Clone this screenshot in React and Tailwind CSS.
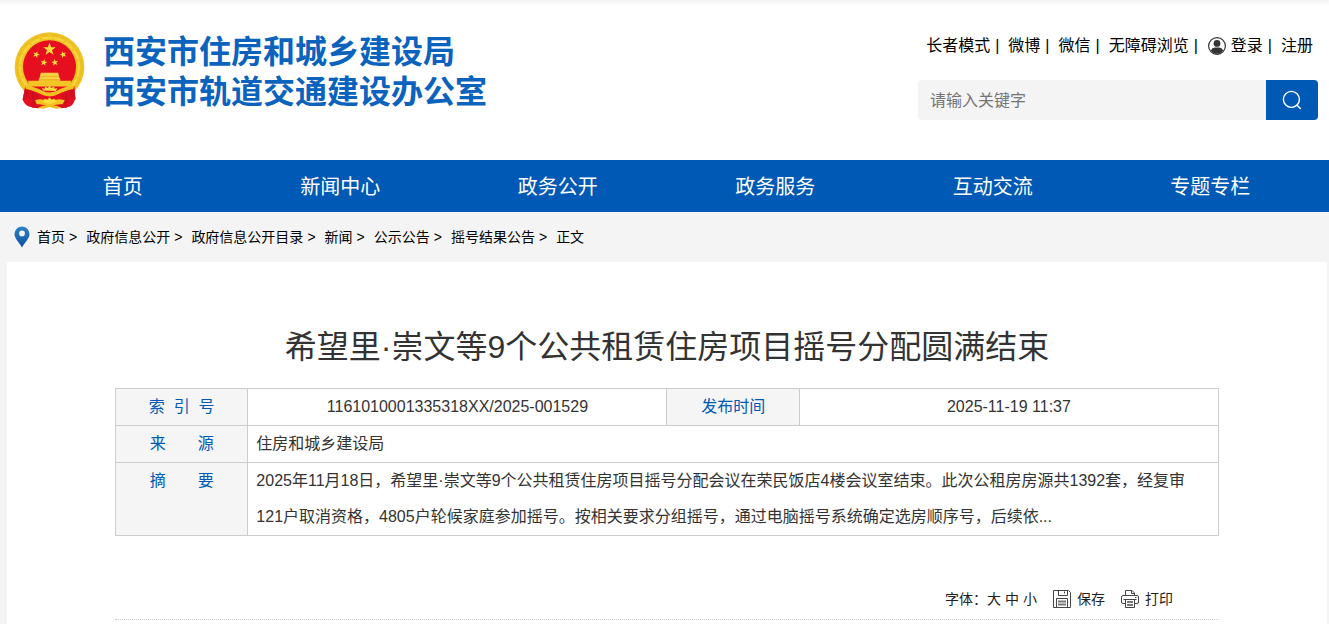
import React, { useState } from "react";

const topLinks = ["长者模式", "微博", "微信", "无障碍浏览", "登录", "注册"];

const navItems = [
  "首页",
  "新闻中心",
  "政务公开",
  "政务服务",
  "互动交流",
  "专题专栏",
];

const crumbs = [
  "首页",
  "政府信息公开",
  "政府信息公开目录",
  "新闻",
  "公示公告",
  "摇号结果公告",
];

const Star = ({ x, y, r, turn = 0 }) => (
  <polygon
    points="0,-10 2.4,-3.2 9.5,-3.1 3.8,1.2 5.9,8.1 0,4 -5.9,8.1 -3.8,1.2 -9.5,-3.1 -2.4,-3.2"
    transform={`translate(${x} ${y}) rotate(${turn}) scale(${r / 10})`}
    fill="#fbdc3c"
  />
);

const Emblem = () => (
  <svg
    viewBox="45 36 212 232"
    className="h-[77px] w-[71px] shrink-0"
    role="img"
    aria-label="国徽"
  >
    <circle cx="151" cy="142" r="105" fill="#f0c424" />
    <circle
      cx="151"
      cy="142"
      r="98"
      fill="none"
      stroke="#dfae1c"
      strokeWidth="2"
      strokeDasharray="22 9"
    />
    <circle
      cx="151"
      cy="142"
      r="89"
      fill="none"
      stroke="#f6d63e"
      strokeWidth="6"
      strokeDasharray="30 6"
    />
    <circle cx="151" cy="141" r="80" fill="#e60f20" />
    <path d="M78 198Q90 214 112 216L151 208L190 216Q212 214 226 198L229 236Q221 262 206 262L96 262Q80 262 70 240Z" fill="#e60f20" />
    <path d="M79 198L70 240L90 234L98 264L120 266L117 226Z" fill="#d90f20" />
    <path d="M223 198L230 240L212 234L204 264L184 266L186 226Z" fill="#d90f20" />
    <path d="M84 208L82 232M99 218L104 258M217 208L220 232M203 218L198 258" stroke="#b40f1c" strokeWidth="2" fill="none" />
    <path d="M86 183H119V178H183V183H217L212 200H91Z" fill="#f4c524" />
    <path d="M125 159H177L180 169H122ZM123 169H179L184 180H118Z" fill="#f8d040" />
    <path d="M122 170H180M118 180H184" stroke="#dfa51c" strokeWidth="2" />
    <path d="M76 197Q105 199 130 213Q138 218 151 218Q164 218 173 213Q196 199 227 197L222 208Q198 211 180 222Q165 230 151 230Q137 230 122 222Q104 211 80 208Z" fill="#f1c122" />
    <path d="M132 212L128 205L137 207L138 200L146 205L151 198L157 205L165 200L166 207L175 205L170 214Z" fill="#fbdc3c" />
    <path d="M107 242Q130 234 151 247Q173 234 197 242L190 254Q170 251 151 263Q132 251 113 254Z" fill="#f1c122" />
    <path d="M130 246L137 237L144 240L151 233L158 240L165 237L173 246L151 254Z" fill="#fbdc3c" />
    <path d="M116 265Q134 252 151 259Q168 252 187 265L171 267L151 262L132 267Z" fill="#efbd20" />
    <Star x={151} y={88} r={20} />
    <Star x={111} y={104} r={11} turn={20} />
    <Star x={192} y={104} r={11} turn={-20} />
    <Star x={134} y={128} r={11} turn={10} />
    <Star x={167} y={128} r={11} turn={-10} />
  </svg>
);

const UserIcon = () => (
  <svg viewBox="0 0 20 20" className="mr-1 size-5" aria-hidden="true">
    <circle cx="10" cy="10" r="8.4" fill="none" stroke="#333" strokeWidth="1.2" />
    <circle cx="10" cy="7.4" r="3.4" fill="#333" />
    <path d="M3.8 14.4Q5 11.7 8 11.5H12Q15 11.7 16.2 14.4Q13.8 17.8 10 17.8T3.8 14.4Z" fill="#333" />
  </svg>
);

const SearchIcon = () => (
  <svg
    viewBox="0 0 20 20"
    className="size-5"
    fill="none"
    stroke="white"
    strokeWidth="1.4"
    strokeLinecap="round"
    aria-hidden="true"
  >
    <circle cx="9.4" cy="9.4" r="8" />
    <path d="M15 15.2L18.4 18.4" />
  </svg>
);

const PinIcon = () => (
  <svg viewBox="0 0 16 22" className="mr-[7px] h-[22px] w-4" aria-hidden="true">
    <defs>
      <linearGradient id="pin" x1="0" y1="0" x2="0" y2="1">
        <stop offset="0" stopColor="#2f83c8" />
        <stop offset="1" stopColor="#0a4f9e" />
      </linearGradient>
    </defs>
    <path
      fill="url(#pin)"
      fillRule="evenodd"
      d="M8 .5A7.5 7.5 0 0 0 .5 8C.5 12.5 5 16 8 21.5C11 16 15.5 12.5 15.5 8A7.5 7.5 0 0 0 8 .5ZM8 4.6A2.9 2.9 0 1 1 8 10.4A2.9 2.9 0 0 1 8 4.6Z"
    />
  </svg>
);

const SaveIcon = () => (
  <svg viewBox="0 0 18 18" className="size-[18px]" fill="none" stroke="#444" aria-hidden="true">
    <path d="M.5 .5H15.5L17.5 2.5V17.5H.5Z" />
    <path d="M5.5 .5V5.5H14.5V.5M11.5 1.5V3.5" />
    <path d="M3.500 17.500V8.500H14.500V17.500" />
    <path d="M5 11.500H13M5 14.500H13" stroke="#777" strokeWidth="2" />
  </svg>
);

const PrintIcon = () => (
  <svg viewBox="0 0 18 18" className="size-[18px]" fill="none" stroke="#444" aria-hidden="true">
    <path d="M4.500 5.500V.5H11L13.500 3V5.500M10.500 .5V3.500H13.500" />
    <path d="M4 13.500H2Q.5 13.500 .5 12V7Q.5 5.500 2 5.500H16Q17.500 5.500 17.500 7V12Q17.500 13.500 16 13.500H14" />
    <path d="M2.500 9.500H15.500M4.500 9.500V17.500H13.500V9.500M14 7.500H15.500" />
    <path d="M6 12H12M6 15H12" stroke="#777" strokeWidth="2" />
  </svg>
);

const Header = () => {
  const [keyword, setKeyword] = useState("");

  return (
    <header className="bg-linear-to-b from-[#f4f4f4] to-white to-[6px]">
      <div className="flex h-40 items-start justify-between pr-[11px] pl-[14px]">
        <a href="#" className="flex pt-8">
          <Emblem />
          <h1 className="ml-[18px] text-[32px] leading-10 font-bold whitespace-nowrap text-[#0b63bd]">
            西安市住房和城乡建设局
            <br />
            西安市轨道交通建设办公室
          </h1>
        </a>
        <div className="w-[400px] pt-8">
          <div className="flex h-7 items-center justify-end pr-[5px] whitespace-nowrap text-black">
            {topLinks.map((link, i) => (
              <React.Fragment key={link}>
                {i > 0 && <span className="mr-[9px] ml-[5px]">|</span>}
                <a href="#" className="flex items-center">
                  {link === "登录" && <UserIcon />}
                  {link}
                </a>
              </React.Fragment>
            ))}
          </div>
          <form
            className="mt-5 flex h-10 overflow-hidden rounded"
            onSubmit={(e) => e.preventDefault()}
          >
            <input
              type="text"
              aria-label="请输入关键字"
              placeholder="请输入关键字"
              value={keyword}
              onChange={(e) => setKeyword(e.target.value)}
              className="min-w-0 flex-1 bg-[#f4f4f4] px-3 pt-[2px] outline-none placeholder:text-[#757575]"
            />
            <button
              type="submit"
              aria-label="搜索"
              className="flex w-[52px] items-center justify-center bg-[#0059b5]"
            >
              <SearchIcon />
            </button>
          </form>
        </div>
      </div>
      <nav className="grid h-[52px] grid-cols-6 items-center bg-[#0059b5] pt-[2px] pr-[10px] pl-[14px] text-center text-xl text-white">
        {navItems.map((item) => (
          <a href="#" key={item}>
            {item}
          </a>
        ))}
      </nav>
    </header>
  );
};

const Breadcrumb = () => (
  <div className="flex h-[50px] items-center px-[14px] text-sm whitespace-nowrap text-black">
    <PinIcon />
    {crumbs.map((crumb) => (
      <React.Fragment key={crumb}>
        <a href="#">{crumb}</a>
        <span className="mr-[9px] ml-1">&gt;</span>
      </React.Fragment>
    ))}
    <span>正文</span>
  </div>
);

const InfoTable = () => (
  <table className="mt-[18px] w-full table-fixed border-collapse leading-9 text-[#333] [&_td]:border [&_td]:border-[#ccc] [&_td]:px-2 [&_th]:border [&_th]:border-[#ccc] [&_th]:bg-[#f5f5f5] [&_th]:align-top [&_th]:font-normal [&_th]:text-[#0059b5]">
    <colgroup>
      <col className="w-[12%]" />
      <col className="w-[38%]" />
      <col className="w-[12%]" />
      <col className="w-[38%]" />
    </colgroup>
    <tbody>
      <tr>
        <th scope="row">索&nbsp;&nbsp;引&nbsp;&nbsp;号</th>
        <td className="text-center">1161010001335318XX/2025-001529</td>
        <th scope="row">发布时间</th>
        <td className="text-center">2025-11-19 11:37</td>
      </tr>
      <tr>
        <th scope="row">来　　源</th>
        <td colSpan={3}>住房和城乡建设局</td>
      </tr>
      <tr>
        <th scope="row">摘　　要</th>
        <td colSpan={3}>
          <p className="pr-3">
            2025年11月18日，希望里·崇文等9个公共租赁住房项目摇号分配会议在荣民饭店4楼会议室结束。此次公租房房源共1392套，经复审121户取消资格，4805户轮候家庭参加摇号。按相关要求分组摇号，通过电脑摇号系统确定选房顺序号，后续依...
          </p>
        </td>
      </tr>
    </tbody>
  </table>
);

const Toolbar = () => (
  <div className="mt-[50px] flex h-[34px] items-center justify-end border-b border-dotted border-[#ccc] pr-[46px] pb-2 text-sm text-[#222]">
    <span>字体：</span>
    <button type="button">大</button>
    <button type="button" className="ml-1">
      中
    </button>
    <button type="button" className="ml-1">
      小
    </button>
    <button type="button" className="ml-4 flex items-center gap-[6px]">
      <SaveIcon />
      保存
    </button>
    <button type="button" className="ml-4 flex items-center gap-[6px]">
      <PrintIcon />
      打印
    </button>
  </div>
);

const App = () => {
  return (
    <div className="flex min-h-screen flex-col bg-[#f4f4f4] font-['Liberation_Sans','Noto_Sans_CJK_SC',sans-serif]">
      <Header />
      <Breadcrumb />
      <main className="mr-[2px] ml-[7px] flex-1 bg-white px-27 pt-[62px]">
        <h2 className="text-center text-[32px] leading-[46px] text-[#333]">
          希望里·崇文等9个公共租赁住房项目摇号分配圆满结束
        </h2>
        <InfoTable />
        <Toolbar />
      </main>
    </div>
  );
};

export default App;
